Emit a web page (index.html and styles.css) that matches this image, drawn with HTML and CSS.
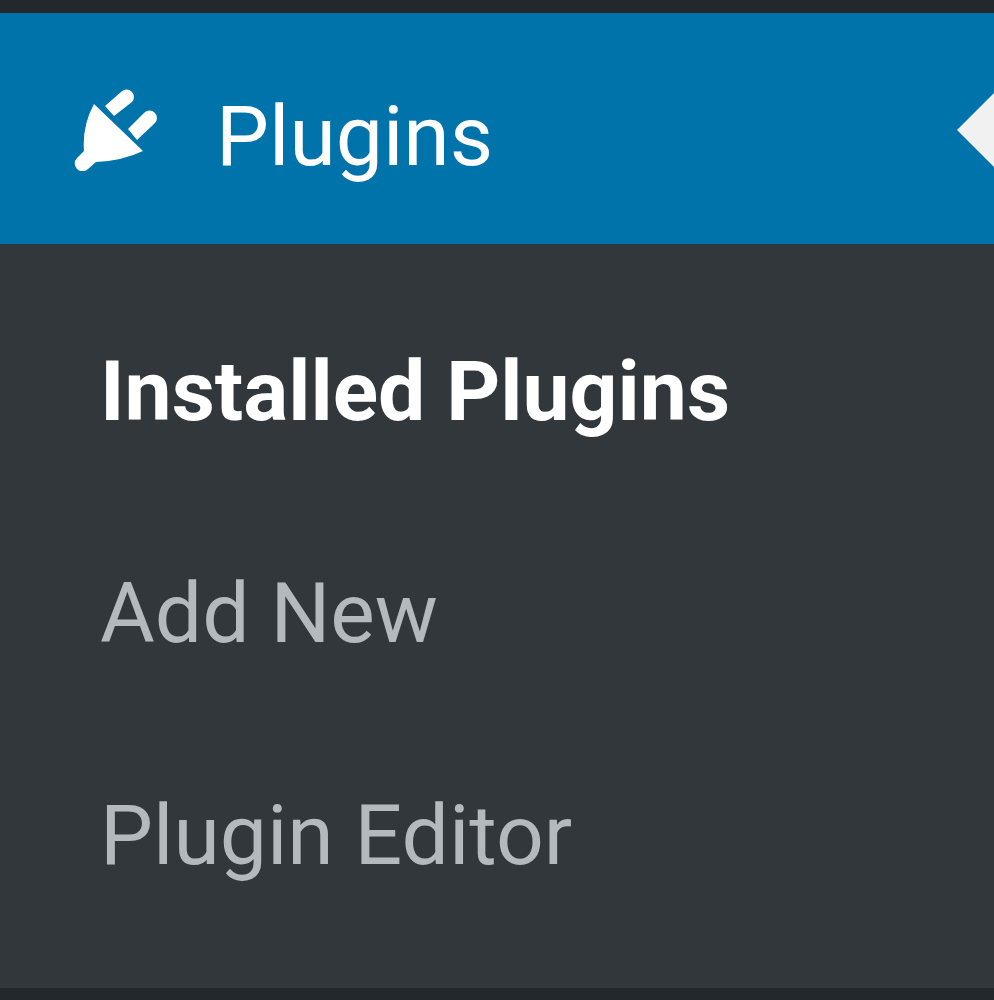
FILE: index.html
```html
<!DOCTYPE html>
<html>
<head>
    <meta http-equiv="Content-Type" content="text/html; charset=utf-8" />
    <title>Plugins menu</title>
    <link rel="stylesheet" href="styles.css">
</head>
<body>
<div class="topbar"></div>
<div class="menu-head">
    <svg class="plug-icon" viewBox="70 85 90 85" width="90" height="85">
        <path d="M94 103 L143 150 Q122 160 96 161 L88 168 A7.5 7.5 0 0 1 77 157 L84 150 Q82 125 94 103 Z"/>
        <path d="M105 105 L121 91 A7 7 0 0 1 132 101 L114 115 Z"/>
        <path d="M128 128 L144 112 A7 7 0 0 1 155 122 L137 139 Z"/>
    </svg>
    <span class="menu-title">Plugins</span>
    <div class="arrow"></div>
</div>
<ul class="submenu">
    <li class="current">Installed Plugins</li>
    <li>Add New</li>
    <li>Plugin Editor</li>
</ul>
<div class="bottombar"></div>
</body>
</html>
```

FILE: styles.css
```css
html,body,ul,li{margin: 0;padding: 0;}
ul,li{list-style: none;}
body{width: 994px;height: 1000px;overflow: hidden;background: #23282d;font-family: Roboto, "Liberation Sans", sans-serif;}

.topbar{height: 13px;background: #23282d;}
.menu-head{position: relative;display: flex;align-items: center;height: 231px;padding-left: 70px;background: #0073aa;overflow: hidden;}
.plug-icon{flex: none;fill: #fff;}
.menu-title{margin: 16px 0 0 56px;font-size: 84px;line-height: 100px;color: #fff;}
.arrow{position: absolute;right: 0;top: 80px;border-style: solid;border-width: 37px 37px 37px 0;border-color: transparent #f1f1f1 transparent transparent;}

.submenu{height: 744px;padding-top: 37px;box-sizing: border-box;background: #32373c;}
.submenu li{height: 222px;line-height: 222px;padding-left: 100px;font-size: 84px;color: #b4b9be;}
.submenu .current{font-weight: 700;color: #fff;}

.bottombar{height: 12px;background: #23282d;}
```
